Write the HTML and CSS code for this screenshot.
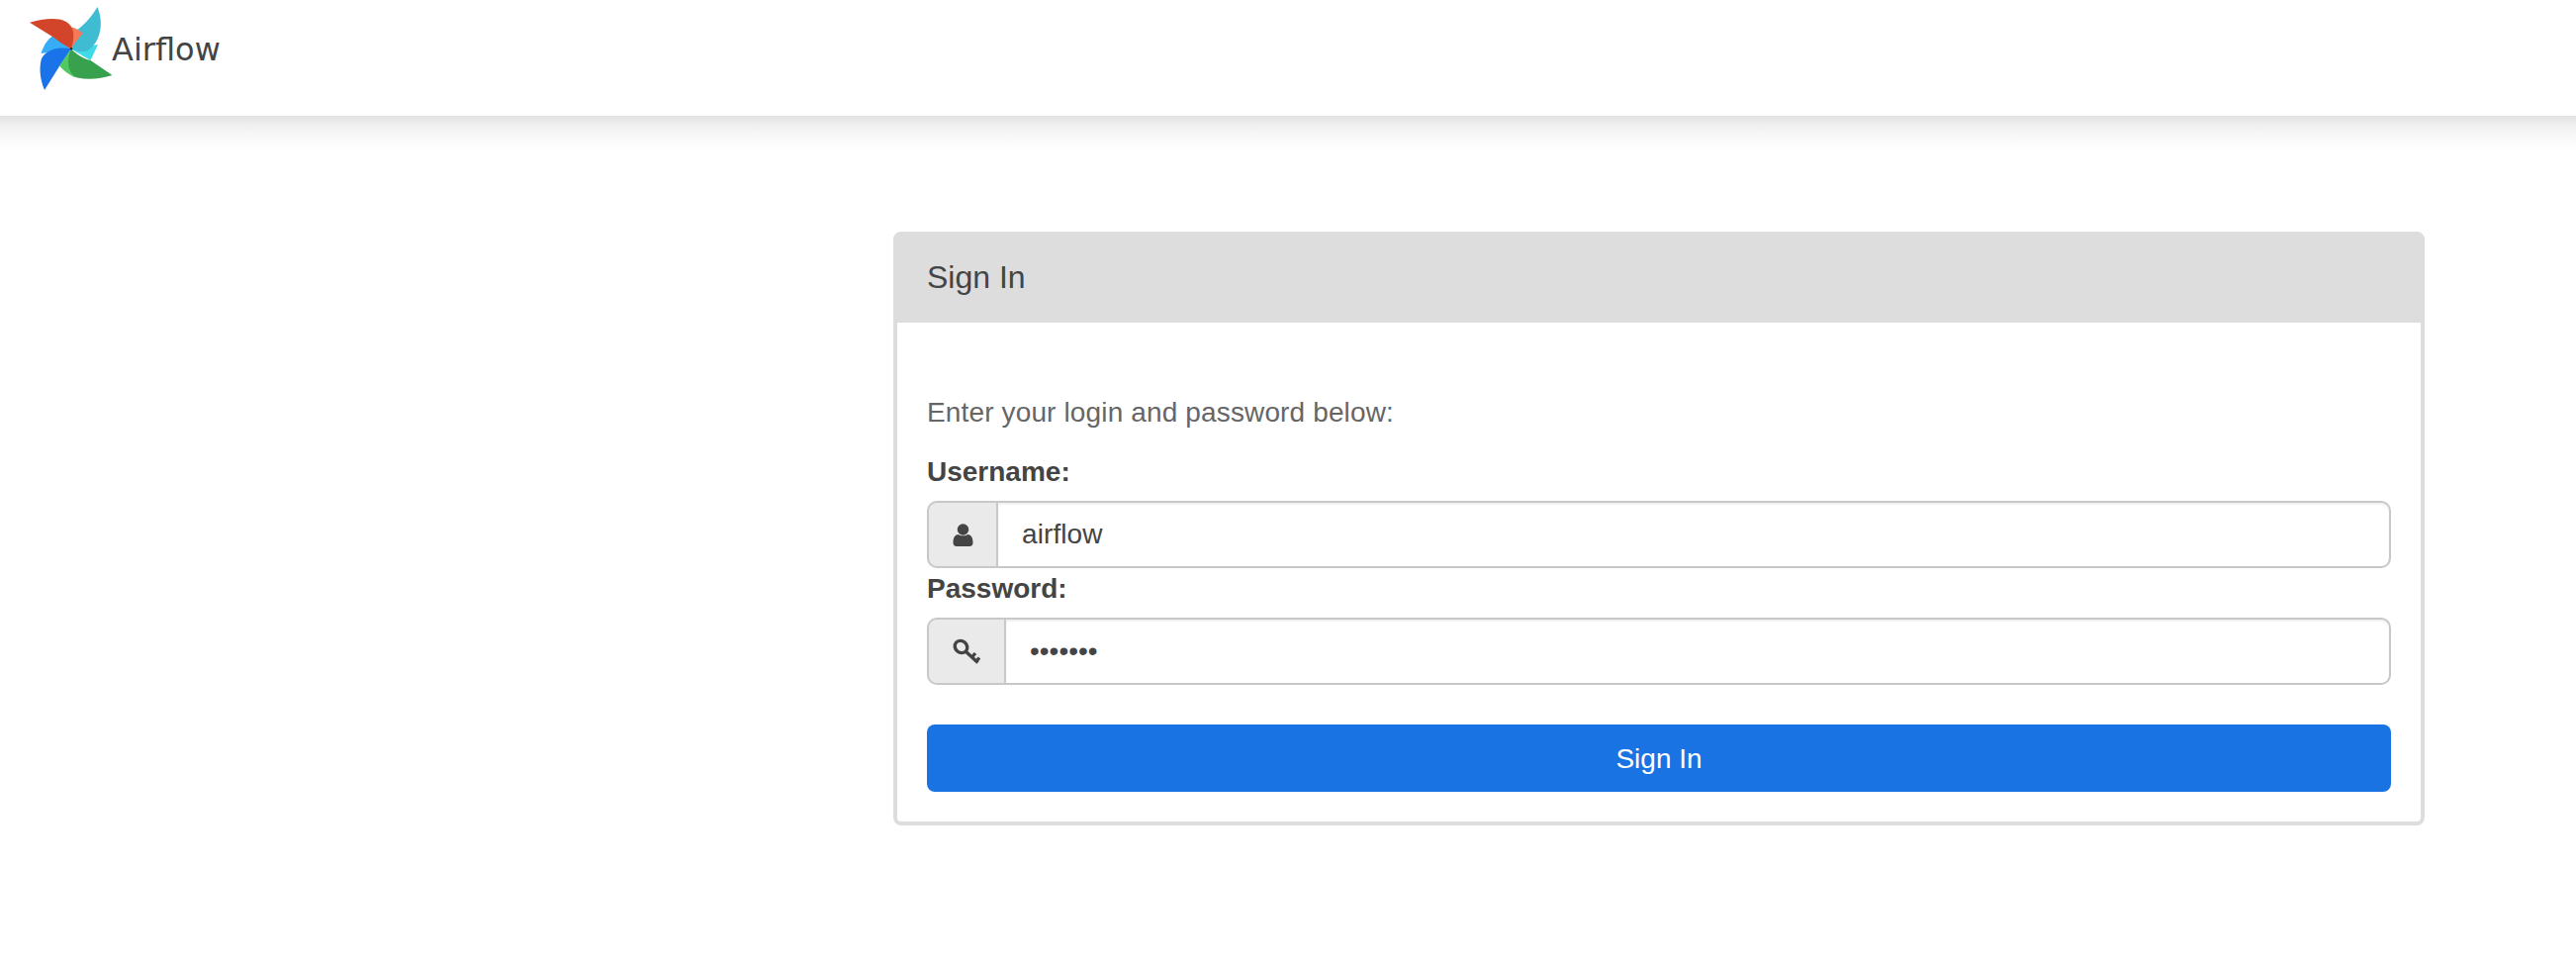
FILE: index.html
```html
<!DOCTYPE html>
<html lang="en">
<head>
<meta charset="utf-8">
<title>Airflow</title>
<link rel="stylesheet" href="styles.css">
</head>
<body>
<header class="navbar">
  <svg class="logo" viewBox="0 0 100 100" width="100" height="100" aria-hidden="true">
    <path fill="#36adf6" d="M33 36.5 C28 40 24 46 21.5 54 L52 49.5 Z"/>
    <path fill="#1a73e8" d="M25 91 C20.5 80 19.5 70 21.5 61 C23 53 36 45.5 52 49.5 L40 67 Z"/>
    <path fill="#52c860" d="M52 49.5 L40 66.5 C44 71 49 75 56 78.5 L56 60 Z"/>
    <path fill="#38a14d" d="M93.5 76 C82 79.5 70 81 58 78.5 C49 75 46.5 62 52 49.5 C57 55 64 59 71.5 61 Z"/>
    <path fill="#40dbe9" d="M52 49.5 L79 45 L71.5 61 Z"/>
    <path fill="#3fbcd2" d="M78.5 7 C82 16 83 25 80.5 34 C79 40 75 47 69 51 C63 53 57 52 52 49.5 L53 33 C63 28 72 18 78.5 7 Z"/>
    <path fill="#f67a5a" d="M53 27.5 C57 28.5 60 31 64 33.5 C59 39 55 44 52 49.5 L50 30 Z"/>
    <path fill="#d2452a" d="M10 22.7 C20 19.5 32 18 40 19.5 C48 21 53 26 54 32 C55 38 53.5 44 52 49.5 C46 46 41 43 33 37 Z"/>
    <circle cx="52" cy="49.3" r="1.3" fill="#22302c"/>
  </svg>
  <span class="brand">Airflow</span>
</header>
<main class="page">
  <section class="panel">
    <div class="panel-title">Sign In</div>
    <form class="panel-body">
      <p class="intro">Enter your login and password below:</p>
      <label class="field-label" for="username">Username:</label>
      <div class="input-group">
        <span class="addon addon-user">
          <svg viewBox="0 0 22 24" width="21" height="23" aria-hidden="true"><circle cx="11" cy="6.2" r="6" fill="#444"/><path fill="#444" d="M0.5 20 C0.5 14.5 3 11.5 6 11.5 C8 13.3 14 13.3 16 11.5 C19 11.5 21.5 14.5 21.5 20 C21.5 22.6 20 24 18 24 H4 C2 24 0.5 22.6 0.5 20 Z"/></svg>
        </span>
        <input class="text-input" id="username" type="text" value="airflow">
      </div>
      <label class="field-label" for="password">Password:</label>
      <div class="input-group">
        <span class="addon addon-key">
          <svg viewBox="0 0 28 26" width="28" height="26" aria-hidden="true"><g fill="none" stroke="#444" stroke-width="3.4"><ellipse cx="8.5" cy="8.5" rx="6.6" ry="5.8" transform="rotate(40 8.5 8.5)"/><path d="M13 13 L25.5 24.5 M19.5 19 L23 15 M24 23 L27 19.5"/></g></svg>
        </span>
        <input class="text-input password" id="password" type="password" value="airflow">
      </div>
      <button class="submit" type="button">Sign In</button>
    </form>
  </section>
</main>
</body>
</html>
```
FILE: styles.css
```css
* { box-sizing: border-box; }
html, body { margin: 0; padding: 0; background: #fff; }
body {
  font-family: "Liberation Sans", Arial, sans-serif;
  color: #444;
  height: 976px;
  overflow: hidden;
}
.navbar {
  position: relative;
  height: 117px;
  display: flex;
  align-items: flex-start;
  padding-left: 20px;
  background: #fff;
}
.navbar::after {
  content: "";
  position: absolute;
  left: 0;
  right: 0;
  top: 100%;
  height: 36px;
  background: linear-gradient(#e2e2e2, #efefef 25%, #f8f8f8 55%, #fff);
}
.logo { flex: none; }
.brand {
  font-family: "DejaVu Sans", Verdana, sans-serif;
  font-size: 32px;
  line-height: 40px;
  margin: 30px 0 0 -7px;
  color: #444;
}
.page { padding: 117px 153px 0 903px; }
.panel {
  height: 600px;
  border: 4px solid #ddd;
  border-radius: 8px;
  background: #fff;
}
.panel-title {
  height: 89px;
  margin: -1px -1px 0;
  padding: 0 31px;
  background: #ddd;
  border-radius: 6px 6px 0 0;
  font-size: 32px;
  line-height: 86px;
  color: #444;
}
.panel-body { padding: 0 30px; }
.intro {
  margin: 0;
  padding-top: 71px;
  font-size: 28px;
  letter-spacing: .14px;
  line-height: 40px;
  color: #666;
}
.field-label {
  display: block;
  margin-top: 20px;
  font-size: 28px;
  font-weight: bold;
  line-height: 40px;
  color: #444;
}
.input-group { display: flex; height: 68px; margin-top: 9px; }
.input-group + .field-label { margin-top: 1px; }
.addon {
  flex: none;
  display: flex;
  align-items: center;
  justify-content: center;
  background: #eaeaea;
  border: 2.5px solid #c8c8c8;
  border-right: 0;
  border-radius: 10px 0 0 10px;
}
.addon-user { width: 70px; }
.addon-key { width: 78px; }
.text-input {
  flex: 1;
  min-width: 0;
  height: 68px;
  padding: 0 24px;
  border: 2.5px solid #c8c8c8;
  border-radius: 0 10px 10px 0;
  font-family: "Liberation Sans", Arial, sans-serif;
  font-size: 28px;
  letter-spacing: .1px;
  color: #444;
  background: #fff;
  box-shadow: inset 0 2px 2px rgba(0, 0, 0, .06);
  outline: none;
}
.password { letter-spacing: 0; }
.submit {
  display: block;
  width: 100%;
  height: 68px;
  margin-top: 40px;
  padding: 2px 0 0;
  border: 0;
  border-radius: 8px;
  background: #1a73e3;
  color: #fff;
  font-family: "Liberation Sans", Arial, sans-serif;
  font-size: 28px;
}
```
